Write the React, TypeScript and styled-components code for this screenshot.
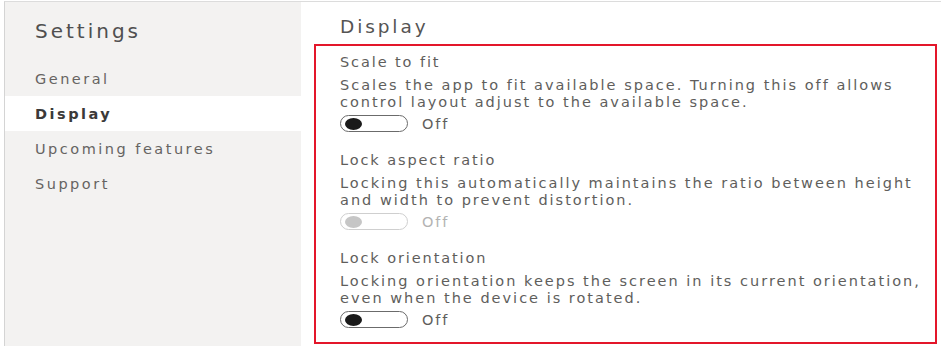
import React from 'react'
import styled, { createGlobalStyle } from 'styled-components'

const GlobalStyle = createGlobalStyle`
  html, body {
    margin: 0;
    padding: 0;
    background: #ffffff;
  }
  body {
    font-family: "DejaVu Sans", "Open Sans", sans-serif;
  }
`

const Window = styled.div`
  display: flex;
  height: 344px;
  margin: 1px 0 0 4px;
  border-top: 1px solid #dcdcdc;
  border-left: 1px solid #d4d4d4;
  overflow: hidden;
`

const Sidebar = styled.nav`
  width: 296px;
  flex-shrink: 0;
  background: #f3f2f1;
  padding-top: 15px;
`

const SidebarTitle = styled.h1`
  margin: 0 0 16px 30px;
  font-size: 20px;
  line-height: 28px;
  font-weight: 400;
  letter-spacing: 3px;
  color: #4f4f4f;
`

const NavItem = styled.div<{ $active?: boolean }>`
  height: 35px;
  display: flex;
  align-items: center;
  padding-left: 30px;
  font-size: 14.5px;
  letter-spacing: 2.5px;
  background: ${(p) => (p.$active ? '#ffffff' : 'transparent')};
  color: ${(p) => (p.$active ? '#3b3a39' : '#666462')};
  font-weight: ${(p) => (p.$active ? 600 : 400)};
`

const Main = styled.main`
  flex: 1;
  padding: 11px 0 0 13px;
`

const PageTitle = styled.h2`
  margin: 0 0 3px 26px;
  font-size: 18.5px;
  line-height: 28px;
  font-weight: 400;
  letter-spacing: 2.9px;
  color: #555453;
`

const Highlight = styled.section`
  width: 623px;
  height: 300px;
  box-sizing: border-box;
  border: 2px solid #e3162a;
  padding: 6px 0 0 24px;
`

const Setting = styled.div`
  margin-bottom: 18px;
`

const SettingTitle = styled.div`
  font-size: 14.5px;
  line-height: 20px;
  letter-spacing: 1.9px;
  color: #5f5e5c;
  margin-bottom: 5px;
`

const SettingText = styled.p`
  margin: 0 0 4px 0;
  font-size: 14.5px;
  line-height: 17px;
  letter-spacing: 2px;
  white-space: nowrap;
  color: #605e5c;
`

const ToggleRow = styled.div`
  display: flex;
  align-items: center;
  gap: 14px;
`

const Track = styled.div<{ $disabled?: boolean }>`
  width: 68px;
  height: 17px;
  box-sizing: border-box;
  border-radius: 9px;
  border: 1.5px solid ${(p) => (p.$disabled ? '#cfcfcf' : '#6b6b6b')};
  display: flex;
  align-items: center;
  padding-left: 4px;
`

const Knob = styled.div<{ $disabled?: boolean }>`
  width: 17px;
  height: 12px;
  border-radius: 50%;
  background: ${(p) => (p.$disabled ? '#c6c6c6' : '#1a1a1a')};
`

const ToggleLabel = styled.span<{ $disabled?: boolean }>`
  font-size: 14.5px;
  letter-spacing: 1.9px;
  color: ${(p) => (p.$disabled ? '#b3b3b3' : '#5f5e5c')};
`

const settings = [
  {
    title: 'Scale to fit',
    text: [
      'Scales the app to fit available space. Turning this off allows',
      'control layout adjust to the available space.',
    ],
    disabled: false,
  },
  {
    title: 'Lock aspect ratio',
    text: [
      'Locking this automatically maintains the ratio between height',
      'and width to prevent distortion.',
    ],
    disabled: true,
  },
  {
    title: 'Lock orientation',
    text: [
      'Locking orientation keeps the screen in its current orientation,',
      'even when the device is rotated.',
    ],
    disabled: false,
  },
]

const navItems = ['General', 'Display', 'Upcoming features', 'Support']

export default function App() {
  return (
    <>
      <GlobalStyle />
      <Window>
        <Sidebar>
          <SidebarTitle>Settings</SidebarTitle>
          {navItems.map((item) => (
            <NavItem key={item} $active={item === 'Display'}>
              {item}
            </NavItem>
          ))}
        </Sidebar>
        <Main>
          <PageTitle>Display</PageTitle>
          <Highlight>
            {settings.map((s) => (
              <Setting key={s.title}>
                <SettingTitle>{s.title}</SettingTitle>
                <SettingText>
                  {s.text[0]}
                  <br />
                  {s.text[1]}
                </SettingText>
                <ToggleRow>
                  <Track $disabled={s.disabled}>
                    <Knob $disabled={s.disabled} />
                  </Track>
                  <ToggleLabel $disabled={s.disabled}>Off</ToggleLabel>
                </ToggleRow>
              </Setting>
            ))}
          </Highlight>
        </Main>
      </Window>
    </>
  )
}
